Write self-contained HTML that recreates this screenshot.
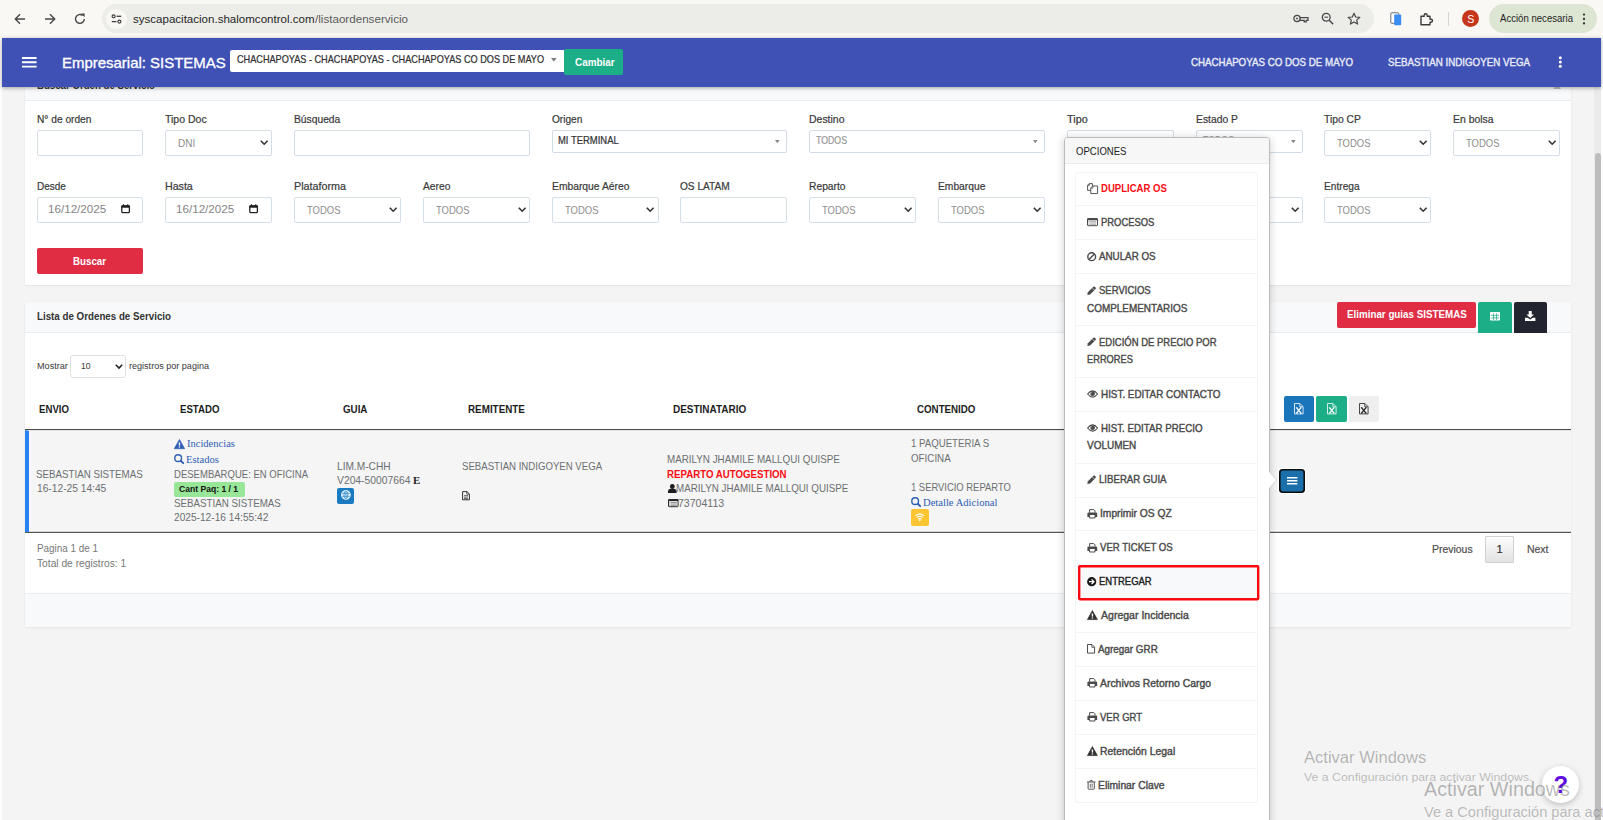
<!DOCTYPE html>
<html lang="es"><head><meta charset="utf-8"><title>Lista de Ordenes de Servicio</title><style>
*{box-sizing:border-box;margin:0;padding:0}
html,body{width:1603px;height:820px;overflow:hidden}
body{position:relative;background:#f4f4f4;font-family:"Liberation Sans",sans-serif;font-size:11.2px;color:#676a6c}
.t{position:absolute;white-space:nowrap;display:inline-block;transform-origin:0 50%}
.b{position:absolute}
.i{position:absolute;overflow:visible}
.sec{position:absolute}
ul{list-style:none}
a{text-decoration:none;color:inherit}
.inp{background:#fff;border:1px solid #d5dde8;border-radius:2px}
.lbl{color:#3a3a3a}
.card{background:#fff;box-shadow:0 1px 2px rgba(0,0,0,.06),0 0 1px rgba(0,0,0,.06)}
.chead{background:#f8f9fa;border-bottom:1px solid #e9ecef}
.btn{border:0}
button{font-family:inherit;padding:0;cursor:pointer}
.med{-webkit-text-stroke:0.4px currentColor}
.med2{-webkit-text-stroke:0.22px currentColor}
</style></head><body><div class="sec" id="chrome" style="left:0;top:0;width:1603px;height:38px;background:#f9f8f4"><div class="b" style="left:102px;top:4px;width:1272px;height:29px;background:#ecede8;border-radius:14.5px"></div><div class="b" style="left:106px;top:8.5px;width:20.5px;height:20.5px;background:#f9f8f4;border-radius:50%"></div><svg class="i" style="left:14px;top:12.5px;" width="12" height="12" viewBox="0 0 12 12" aria-hidden="true"><path d="M11 6H1.6M6 1.3L1.3 6L6 10.7" fill="none" stroke="#474747" stroke-width="1.4"></path></svg><svg class="i" style="left:44px;top:12.5px;" width="12" height="12" viewBox="0 0 12 12" aria-hidden="true"><path d="M1 6H10.4M6 1.3L10.7 6L6 10.7" fill="none" stroke="#474747" stroke-width="1.4"></path></svg><svg class="i" style="left:74px;top:12.5px;" width="12" height="12" viewBox="0 0 12 12" aria-hidden="true"><path d="M10.3 6A4.4 4.4 0 1 1 8.6 2.5" fill="none" stroke="#474747" stroke-width="1.4"></path><path d="M7 0.6H10.6V4.2Z" fill="#474747"></path></svg><svg class="i" style="left:111px;top:14px;" width="11" height="10" viewBox="0 0 11 10" aria-hidden="true"><circle cx="2.6" cy="2.3" r="1.5" fill="none" stroke="#3c3c3c" stroke-width="1.2"></circle><path d="M5.6 2.3H10.2" stroke="#3c3c3c" stroke-width="1.3"></path><circle cx="8.4" cy="7.6" r="1.5" fill="none" stroke="#3c3c3c" stroke-width="1.2"></circle><path d="M0.8 7.6H5.4" stroke="#3c3c3c" stroke-width="1.3"></path></svg><span class="t" style="left: 132.8px; top: 11px; font-size: 11.6px; line-height: 16px; color: rgb(31, 31, 31); transform: scaleX(0.9953);">syscapacitacion.shalomcontrol.com</span><span class="t" style="left: 314.6px; top: 11px; font-size: 11.6px; line-height: 16px; color: rgb(90, 90, 90); transform: scaleX(1.0022);">/listaordenservicio</span><svg class="i" style="left:1293px;top:13px;" width="16" height="11" viewBox="0 0 16 11" aria-hidden="true"><circle cx="4" cy="5.5" r="3.1" fill="none" stroke="#474747" stroke-width="1.3"></circle><circle cx="4" cy="5.5" r="0.9" fill="#474747"></circle><path d="M7 4.6H15V7.4H13.2V8.8H11.2V7.4H7" fill="none" stroke="#474747" stroke-width="1.2"></path></svg><svg class="i" style="left:1321px;top:12px;" width="13" height="13" viewBox="0 0 13 13" aria-hidden="true"><circle cx="5.2" cy="5.2" r="3.9" fill="none" stroke="#474747" stroke-width="1.3"></circle><path d="M8.2 8.2L12.2 12.2" stroke="#474747" stroke-width="1.5"></path><path d="M3.3 5.2H7.1" stroke="#474747" stroke-width="1.1"></path></svg><svg class="i" style="left:1347px;top:12px;" width="14" height="13" viewBox="0 0 14 13" aria-hidden="true"><path d="M7 1.2L8.7 5L12.8 5.4L9.7 8.1L10.6 12.1L7 10L3.4 12.1L4.3 8.1L1.2 5.4L5.3 5Z" fill="none" stroke="#474747" stroke-width="1.2" stroke-linejoin="round"></path></svg><svg class="i" style="left:1390px;top:12px;" width="12" height="14" viewBox="0 0 12 14" aria-hidden="true"><rect x="0.8" y="0.8" width="8" height="10.5" rx="1" fill="#fff" stroke="#6a7076" stroke-width="1"></rect><rect x="4.2" y="2.6" width="7" height="10.6" rx="1" fill="#3b8df0"></rect></svg><svg class="i" style="left:1419px;top:11.5px;" width="14" height="14" viewBox="0 0 14 14" aria-hidden="true"><path d="M2 4.2H5.2V3.2A1.5 1.5 0 0 1 8.2 3.2V4.2H11V7.2H12A1.5 1.5 0 0 1 12 10.2H11V12.8H2Z" fill="none" stroke="#3c3c3c" stroke-width="1.4" stroke-linejoin="round"></path></svg><div class="b" style="left:1448.3px;top:12px;width:1px;height:14px;background:#d5d8cf"></div><div class="b" style="left:1462px;top:10px;width:17.4px;height:17.4px;background:#c5361b;border-radius:50%"></div><span class="t" style="left:1467.2px;top:13px;font-size:10.6px;line-height:12px;color:#fff;">S</span><div class="b" style="left:1489px;top:4px;width:108px;height:29px;background:#dde5d3;border-radius:14.5px"></div><span class="t" style="left: 1499.5px; top: 12px; font-size: 10.4px; line-height: 14px; color: rgb(31, 31, 31); transform: scaleX(0.9224);">Acción necesaria</span><svg class="i" style="left:1582px;top:12.6px;" width="4" height="12" viewBox="0 0 4 12" aria-hidden="true"><circle cx="2" cy="1.6" r="1.15" fill="#333"></circle><circle cx="2" cy="6" r="1.15" fill="#333"></circle><circle cx="2" cy="10.4" r="1.15" fill="#333"></circle></svg></div><div class="b" style="left:0px;top:38px;width:2px;height:782px;background:#fdfdfd"></div><div class="b" style="left:1601px;top:38px;width:2px;height:782px;background:#fdfdfd"></div><section class="sec card" id="buscar" style="left:25px;top:66px;width:1546px;height:219px"><div class="b chead" style="left:0px;top:0px;width:1546px;height:35px;"></div><h2 class="t" style="left: 12px; top: 12px; line-height: 14px; font-weight: 700; color: rgb(51, 51, 51); font-size: 11.2px; transform: scaleX(0.8626);">Buscar Orden de Servicio</h2><svg class="i" style="left:1528px;top:18px;" width="8" height="5" viewBox="0 0 8 5" aria-hidden="true"><path d="M0 5L4 0L8 5Z" fill="#bdbdbd"></path></svg><form><label class="t lbl med2" style="left: 12px; top: 46px; font-size: 11.2px; line-height: 14px; color: rgb(58, 58, 58); transform: scaleX(0.9093);">N° de orden</label><div class="b inp" style="left:12px;top:64px;width:106px;height:26px;"></div><label class="t lbl med2" style="left: 140px; top: 46px; font-size: 11.2px; line-height: 14px; color: rgb(58, 58, 58); transform: scaleX(0.94);">Tipo Doc</label><div class="b inp" style="left:140px;top:64px;width:107px;height:26px;"></div><span class="t" style="left: 153px; top: 70px; font-size: 10.8px; line-height: 14px; color: rgb(141, 141, 141); transform: scaleX(0.9243);">DNI</span><svg class="i" style="left:234.8px;top:74.1px;" width="8.4" height="5" viewBox="0 0 8.4 5" aria-hidden="true"><path d="M0.8 0.8L4.2 4.2L7.6 0.8" fill="none" stroke="#333" stroke-width="1.6"></path></svg><label class="t lbl med2" style="left: 269px; top: 46px; font-size: 11.2px; line-height: 14px; color: rgb(58, 58, 58); transform: scaleX(0.9188);">Búsqueda</label><div class="b inp" style="left:269px;top:64px;width:236px;height:26px;"></div><label class="t lbl med2" style="left: 526.6px; top: 46px; font-size: 11.2px; line-height: 14px; color: rgb(58, 58, 58); transform: scaleX(0.902);">Origen</label><div class="b inp" style="left:526.6px;top:64px;width:235.4px;height:22.5px;border-color:#d3dbe6;"></div><span class="t med2" style="left: 533.2px; top: 68px; font-size: 10.4px; line-height: 14px; color: rgb(51, 51, 51); transform: scaleX(0.9089);">MI TERMINAL</span><svg class="i" style="left:749.7px;top:74px;" width="5" height="3.4" viewBox="0 0 5 3.4" aria-hidden="true"><path d="M0 0H4.6L2.3 3.2Z" fill="#888"></path></svg><label class="t lbl med2" style="left: 784px; top: 46px; font-size: 11.2px; line-height: 14px; color: rgb(58, 58, 58); transform: scaleX(0.9357);">Destino</label><div class="b inp" style="left:784px;top:64px;width:236px;height:22.5px;border-color:#d3dbe6;"></div><span class="t med2" style="left: 790.6px; top: 68px; font-size: 10.4px; line-height: 14px; color: rgb(153, 153, 153); transform: scaleX(0.8432);">TODOS</span><svg class="i" style="left:1007.7px;top:74px;" width="5" height="3.4" viewBox="0 0 5 3.4" aria-hidden="true"><path d="M0 0H4.6L2.3 3.2Z" fill="#888"></path></svg><label class="t lbl med2" style="left: 1042px; top: 46px; font-size: 11.2px; line-height: 14px; color: rgb(58, 58, 58); transform: scaleX(0.9691);">Tipo</label><div class="b inp" style="left:1042px;top:64px;width:107px;height:22.5px;border-color:#d3dbe6;"></div><svg class="i" style="left:1136.7px;top:74px;" width="5" height="3.4" viewBox="0 0 5 3.4" aria-hidden="true"><path d="M0 0H4.6L2.3 3.2Z" fill="#888"></path></svg><label class="t lbl med2" style="left: 1171px; top: 46px; font-size: 11.2px; line-height: 14px; color: rgb(58, 58, 58); transform: scaleX(0.925);">Estado P</label><div class="b inp" style="left:1171px;top:64px;width:107px;height:22.5px;border-color:#d3dbe6;"></div><span class="t med2" style="left: 1177.6px; top: 68px; font-size: 10.4px; line-height: 14px; color: rgb(153, 153, 153); transform: scaleX(0.8432);">TODOS</span><svg class="i" style="left:1265.7px;top:74px;" width="5" height="3.4" viewBox="0 0 5 3.4" aria-hidden="true"><path d="M0 0H4.6L2.3 3.2Z" fill="#888"></path></svg><label class="t lbl med2" style="left: 1299px; top: 46px; font-size: 11.2px; line-height: 14px; color: rgb(58, 58, 58); transform: scaleX(0.925);">Tipo CP</label><div class="b inp" style="left:1299px;top:64px;width:107px;height:26px;"></div><span class="t" style="left: 1312px; top: 70px; font-size: 10.8px; line-height: 14px; color: rgb(141, 141, 141); transform: scaleX(0.8769);">TODOS</span><svg class="i" style="left:1393.8px;top:74.1px;" width="8.4" height="5" viewBox="0 0 8.4 5" aria-hidden="true"><path d="M0.8 0.8L4.2 4.2L7.6 0.8" fill="none" stroke="#333" stroke-width="1.6"></path></svg><label class="t lbl med2" style="left: 1428px; top: 46px; font-size: 11.2px; line-height: 14px; color: rgb(58, 58, 58); transform: scaleX(0.9323);">En bolsa</label><div class="b inp" style="left:1428px;top:64px;width:107px;height:26px;"></div><span class="t" style="left: 1441px; top: 70px; font-size: 10.8px; line-height: 14px; color: rgb(141, 141, 141); transform: scaleX(0.8769);">TODOS</span><svg class="i" style="left:1522.8px;top:74.1px;" width="8.4" height="5" viewBox="0 0 8.4 5" aria-hidden="true"><path d="M0.8 0.8L4.2 4.2L7.6 0.8" fill="none" stroke="#333" stroke-width="1.6"></path></svg><label class="t lbl med2" style="left: 12px; top: 113px; font-size: 11.2px; line-height: 14px; color: rgb(58, 58, 58); transform: scaleX(0.8904);">Desde</label><div class="b inp" style="left:12px;top:131px;width:106px;height:26px;"></div><span class="t" style="left: 22.6px; top: 136px; font-size: 10.8px; line-height: 14px; color: rgb(132, 132, 132); transform: scaleX(1.0768);">16/12/2025</span><svg class="i" style="left:96.4px;top:138.4px;" width="9.4" height="9.4" viewBox="0 0 9.4 9.4" aria-hidden="true"><rect x="0.8" y="1.8" width="7.6" height="6.9" rx="0.9" fill="#fff" stroke="#222" stroke-width="1.3"></rect><rect x="0.4" y="1.2" width="8.4" height="2.5" rx="0.6" fill="#222"></rect><path d="M2.5 0.2V1.6M6.7 0.2V1.6" stroke="#222" stroke-width="1.1"></path></svg><label class="t lbl med2" style="left: 140px; top: 113px; font-size: 11.2px; line-height: 14px; color: rgb(58, 58, 58); transform: scaleX(0.9509);">Hasta</label><div class="b inp" style="left:140px;top:131px;width:107px;height:26px;"></div><span class="t" style="left: 150.6px; top: 136px; font-size: 10.8px; line-height: 14px; color: rgb(132, 132, 132); transform: scaleX(1.0768);">16/12/2025</span><svg class="i" style="left:224.4px;top:138.4px;" width="9.4" height="9.4" viewBox="0 0 9.4 9.4" aria-hidden="true"><rect x="0.8" y="1.8" width="7.6" height="6.9" rx="0.9" fill="#fff" stroke="#222" stroke-width="1.3"></rect><rect x="0.4" y="1.2" width="8.4" height="2.5" rx="0.6" fill="#222"></rect><path d="M2.5 0.2V1.6M6.7 0.2V1.6" stroke="#222" stroke-width="1.1"></path></svg><label class="t lbl med2" style="left: 269px; top: 113px; font-size: 11.2px; line-height: 14px; color: rgb(58, 58, 58); transform: scaleX(0.961);">Plataforma</label><div class="b inp" style="left:269px;top:131px;width:107px;height:26px;"></div><span class="t" style="left: 282px; top: 137px; font-size: 10.8px; line-height: 14px; color: rgb(141, 141, 141); transform: scaleX(0.8769);">TODOS</span><svg class="i" style="left:363.8px;top:141.1px;" width="8.4" height="5" viewBox="0 0 8.4 5" aria-hidden="true"><path d="M0.8 0.8L4.2 4.2L7.6 0.8" fill="none" stroke="#333" stroke-width="1.6"></path></svg><label class="t lbl med2" style="left: 398px; top: 113px; font-size: 11.2px; line-height: 14px; color: rgb(58, 58, 58); transform: scaleX(0.9176);">Aereo</label><div class="b inp" style="left:398px;top:131px;width:107px;height:26px;"></div><span class="t" style="left: 411px; top: 137px; font-size: 10.8px; line-height: 14px; color: rgb(141, 141, 141); transform: scaleX(0.8769);">TODOS</span><svg class="i" style="left:492.8px;top:141.1px;" width="8.4" height="5" viewBox="0 0 8.4 5" aria-hidden="true"><path d="M0.8 0.8L4.2 4.2L7.6 0.8" fill="none" stroke="#333" stroke-width="1.6"></path></svg><label class="t lbl med2" style="left: 526.6px; top: 113px; font-size: 11.2px; line-height: 14px; color: rgb(58, 58, 58); transform: scaleX(0.9218);">Embarque Aéreo</label><div class="b inp" style="left:526.6px;top:131px;width:107px;height:26px;"></div><span class="t" style="left: 539.6px; top: 137px; font-size: 10.8px; line-height: 14px; color: rgb(141, 141, 141); transform: scaleX(0.8769);">TODOS</span><svg class="i" style="left:621.4px;top:141.1px;" width="8.4" height="5" viewBox="0 0 8.4 5" aria-hidden="true"><path d="M0.8 0.8L4.2 4.2L7.6 0.8" fill="none" stroke="#333" stroke-width="1.6"></path></svg><label class="t lbl med2" style="left: 655px; top: 113px; font-size: 11.2px; line-height: 14px; color: rgb(58, 58, 58); transform: scaleX(0.9049);">OS LATAM</label><div class="b inp" style="left:655px;top:131px;width:107px;height:26px;"></div><label class="t lbl med2" style="left: 784px; top: 113px; font-size: 11.2px; line-height: 14px; color: rgb(58, 58, 58); transform: scaleX(0.9193);">Reparto</label><div class="b inp" style="left:784px;top:131px;width:107px;height:26px;"></div><span class="t" style="left: 797px; top: 137px; font-size: 10.8px; line-height: 14px; color: rgb(141, 141, 141); transform: scaleX(0.8769);">TODOS</span><svg class="i" style="left:878.8px;top:141.1px;" width="8.4" height="5" viewBox="0 0 8.4 5" aria-hidden="true"><path d="M0.8 0.8L4.2 4.2L7.6 0.8" fill="none" stroke="#333" stroke-width="1.6"></path></svg><label class="t lbl med2" style="left: 913px; top: 113px; font-size: 11.2px; line-height: 14px; color: rgb(58, 58, 58); transform: scaleX(0.9182);">Embarque</label><div class="b inp" style="left:913px;top:131px;width:107px;height:26px;"></div><span class="t" style="left: 926px; top: 137px; font-size: 10.8px; line-height: 14px; color: rgb(141, 141, 141); transform: scaleX(0.8769);">TODOS</span><svg class="i" style="left:1007.8px;top:141.1px;" width="8.4" height="5" viewBox="0 0 8.4 5" aria-hidden="true"><path d="M0.8 0.8L4.2 4.2L7.6 0.8" fill="none" stroke="#333" stroke-width="1.6"></path></svg><div class="b inp" style="left:1171px;top:131px;width:107px;height:26px;"></div><span class="t" style="left: 1184px; top: 137px; font-size: 10.8px; line-height: 14px; color: rgb(141, 141, 141); transform: scaleX(0.8769);">TODOS</span><svg class="i" style="left:1265.8px;top:141.1px;" width="8.4" height="5" viewBox="0 0 8.4 5" aria-hidden="true"><path d="M0.8 0.8L4.2 4.2L7.6 0.8" fill="none" stroke="#333" stroke-width="1.6"></path></svg><label class="t lbl med2" style="left: 1299px; top: 113px; font-size: 11.2px; line-height: 14px; color: rgb(58, 58, 58); transform: scaleX(0.9085);">Entrega</label><div class="b inp" style="left:1299px;top:131px;width:107px;height:26px;"></div><span class="t" style="left: 1312px; top: 137px; font-size: 10.8px; line-height: 14px; color: rgb(141, 141, 141); transform: scaleX(0.8769);">TODOS</span><svg class="i" style="left:1393.8px;top:141.1px;" width="8.4" height="5" viewBox="0 0 8.4 5" aria-hidden="true"><path d="M0.8 0.8L4.2 4.2L7.6 0.8" fill="none" stroke="#333" stroke-width="1.6"></path></svg><button type="button" class="b btn" style="left:12px;top:182.4px;width:106px;height:25.7px;background:#e02d44;border-radius:2px"><span class="t" style="left: 36.3px; top: 5.6px; font-size: 10.6px; line-height: 14px; font-weight: 700; color: rgb(255, 255, 255); transform: scaleX(0.9187);">Buscar</span></button></form></section><section class="sec card" id="lista" style="left:25px;top:302px;width:1546px;height:325px"><div class="b chead" style="left:0px;top:0px;width:1546px;height:31px;"></div><h2 class="t" style="left: 12px; top: 7px; line-height: 14px; font-weight: 700; color: rgb(51, 51, 51); font-size: 11.2px; transform: scaleX(0.8725);">Lista de Ordenes de Servicio</h2><button type="button" class="b btn" style="left:1311.8px;top:0px;width:139.2px;height:25.5px;background:#e02d44;border-radius:2px"><span class="t" style="left: 9.9px; top: 5px; font-size: 10.8px; line-height: 14px; font-weight: 700; color: rgb(255, 255, 255); transform: scaleX(0.9076);">Eliminar guias SISTEMAS</span></button><button class="b btn" style="left:1452.7px;top:0px;width:34px;height:31.2px;background:#1bae87;border-radius:2px 2px 0 0"></button><svg class="i" style="left:1464.6px;top:10.4px;" width="10" height="9" viewBox="0 0 10 9" aria-hidden="true"><rect x="0" y="0" width="10" height="8.6" rx="0.8" fill="#fff"></rect><path d="M0.8 3.3H9.2M0.8 5.9H9.2M3.6 1.4V8M6.5 1.4V8" stroke="#1bae87" stroke-width="0.75"></path></svg><button class="b btn" style="left:1488.7px;top:0px;width:32.9px;height:31.2px;background:#22242f;border-radius:2px 2px 0 0"></button><svg class="i" style="left:1500px;top:9.4px;" width="10.4" height="10" viewBox="0 0 10.4 10" aria-hidden="true"><path d="M3.7 0H6.7V3.4H9L5.2 7L1.4 3.4H3.7Z" fill="#fff"></path><path d="M0 6.8H2.6L5.2 8.6L7.8 6.8H10.4V10H0Z" fill="#fff"></path></svg><span class="t" style="left: 12px; top: 57px; font-size: 9.6px; line-height: 14px; color: rgb(58, 58, 58); transform: scaleX(0.9503);">Mostrar</span><div class="b inp" style="left:45.4px;top:53px;width:56px;height:23px;border-color:#e0e0e0;border-radius:3px;"></div><span class="t" style="left: 56.4px; top: 57px; font-size: 9.8px; line-height: 14px; color: rgb(58, 58, 58); transform: scaleX(0.8802);">10</span><svg class="i" style="left:89.6px;top:62px;" width="8" height="5" viewBox="0 0 8 5" aria-hidden="true"><path d="M0.8 0.8L4 4L7.2 0.8" fill="none" stroke="#222" stroke-width="1.6"></path></svg><span class="t" style="left: 103.6px; top: 57px; font-size: 9.6px; line-height: 14px; color: rgb(58, 58, 58); transform: scaleX(0.9434);">registros por pagina</span><div role="table"><div role="row"><span class="t" style="left: 14px; top: 100px; font-size: 11px; line-height: 14px; font-weight: 700; color: rgb(29, 29, 29); transform: scaleX(0.8763);">ENVIO</span><span class="t" style="left: 155px; top: 100px; font-size: 11px; line-height: 14px; font-weight: 700; color: rgb(29, 29, 29); transform: scaleX(0.8772);">ESTADO</span><span class="t" style="left: 317.5px; top: 100px; font-size: 11px; line-height: 14px; font-weight: 700; color: rgb(29, 29, 29); transform: scaleX(0.8873);">GUIA</span><span class="t" style="left: 443px; top: 100px; font-size: 11px; line-height: 14px; font-weight: 700; color: rgb(29, 29, 29); transform: scaleX(0.8952);">REMITENTE</span><span class="t" style="left: 648px; top: 100px; font-size: 11px; line-height: 14px; font-weight: 700; color: rgb(29, 29, 29); transform: scaleX(0.9063);">DESTINATARIO</span><span class="t" style="left: 891.8px; top: 100px; font-size: 11px; line-height: 14px; font-weight: 700; color: rgb(29, 29, 29); transform: scaleX(0.8848);">CONTENIDO</span><button class="b btn" style="left:1258.6px;top:94px;width:30px;height:25.7px;background:#1a75bb;border-radius:2px"></button><svg class="i" style="left:1268.8px;top:100.9px;" width="9.6" height="11.4" viewBox="0 0 9.6 11.4" aria-hidden="true"><path d="M0.5 0.5H5.9L9.1 3.7V10.9H0.5Z" fill="none" stroke="#fff" stroke-width="0.9" stroke-linejoin="round" opacity="0.9"></path><path d="M5.8 0.7V3.8H8.9" fill="none" stroke="#fff" stroke-width="0.8" opacity="0.9"></path><path d="M2.5 4.6L7 10.2M7 4.6L2.5 10.2" stroke="#fff" stroke-width="1.35"></path><path d="M1.9 4.6H3.3M6.2 4.6H7.6M1.9 10.2H3.4M6.1 10.2H7.6" stroke="#fff" stroke-width="0.7"></path></svg><button class="b btn" style="left:1291px;top:94px;width:31px;height:25.7px;background:#1bae87;border-radius:2px"></button><svg class="i" style="left:1301.7px;top:100.9px;" width="9.6" height="11.4" viewBox="0 0 9.6 11.4" aria-hidden="true"><path d="M0.5 0.5H5.9L9.1 3.7V10.9H0.5Z" fill="none" stroke="#fff" stroke-width="0.9" stroke-linejoin="round" opacity="0.9"></path><path d="M5.8 0.7V3.8H8.9" fill="none" stroke="#fff" stroke-width="0.8" opacity="0.9"></path><path d="M2.5 4.6L7 10.2M7 4.6L2.5 10.2" stroke="#fff" stroke-width="1.35"></path><path d="M1.9 4.6H3.3M6.2 4.6H7.6M1.9 10.2H3.4M6.1 10.2H7.6" stroke="#fff" stroke-width="0.7"></path></svg><button class="b btn" style="left:1324px;top:94px;width:30px;height:25.7px;background:#efefef;border-radius:2px"></button><svg class="i" style="left:1334.4px;top:100.9px;" width="9.6" height="11.4" viewBox="0 0 9.6 11.4" aria-hidden="true"><path d="M0.5 0.5H5.9L9.1 3.7V10.9H0.5Z" fill="none" stroke="#222" stroke-width="0.9" stroke-linejoin="round" opacity="0.9"></path><path d="M5.8 0.7V3.8H8.9" fill="none" stroke="#222" stroke-width="0.8" opacity="0.9"></path><path d="M2.5 4.6L7 10.2M7 4.6L2.5 10.2" stroke="#222" stroke-width="1.35"></path><path d="M1.9 4.6H3.3M6.2 4.6H7.6M1.9 10.2H3.4M6.1 10.2H7.6" stroke="#222" stroke-width="0.7"></path></svg></div><div class="b" style="left:0px;top:127px;width:1546px;height:1px;background:#4a4a4a"></div><div role="row"><div class="b" style="left:0px;top:128px;width:1546px;height:102px;background:#f5f5f5;border-left:4px solid #2a82f2;border-top:1px solid #e4e4e4"></div><div class="b" style="left:4px;top:228px;width:1542px;height:1px;background:#fbfbfb"></div><div class="b" style="left:4px;top:229px;width:1542px;height:1px;background:#cfcfcf"></div><div class="b" style="left:0px;top:230px;width:1546px;height:1px;background:#585858"></div><span class="t" style="left: 11.4px; top: 165px; font-size: 11.2px; line-height: 14px; color: rgb(108, 111, 113); transform: scaleX(0.8711);">SEBASTIAN SISTEMAS</span><span class="t" style="left: 11.5px; top: 179px; font-size: 11.2px; line-height: 14px; color: rgb(108, 111, 113); transform: scaleX(0.9132);">16-12-25 14:45</span><svg class="i" style="left:148.9px;top:136.65px;" width="10.9" height="10.028" viewBox="0 0 10 9.2" aria-hidden="true"><path d="M5 0.4L9.8 8.9H0.2Z" fill="#2f5fb3" stroke="#2f5fb3" stroke-width="0.6" stroke-linejoin="round"></path><path d="M5 3.2V6" stroke="#fff" stroke-width="1.3"></path><circle cx="5" cy="7.4" r="0.7" fill="#fff"></circle></svg><a class="t" style="left: 161.9px; top: 134px; font-size: 10.7px; line-height: 14px; color: rgb(47, 95, 179); font-family: &quot;Liberation Serif&quot;, serif; transform: scaleX(0.9841);">Incidencias</a><svg class="i" style="left:149.3px;top:151.95px;" width="9.9" height="9.9" viewBox="0 0 10 10" aria-hidden="true"><circle cx="4.2" cy="4.2" r="3.4" fill="none" stroke="#2f5fb3" stroke-width="1.4"></circle><path d="M6.8 6.8L9.3 9.3" stroke="#2f5fb3" stroke-width="1.9" stroke-linecap="round"></path></svg><a class="t" style="left: 161.2px; top: 150px; font-size: 10.7px; line-height: 14px; color: rgb(47, 95, 179); font-family: &quot;Liberation Serif&quot;, serif; transform: scaleX(0.9925);">Estados</a><span class="t" style="left: 149.1px; top: 165px; font-size: 11.2px; line-height: 14px; color: rgb(108, 111, 113); transform: scaleX(0.852);">DESEMBARQUE: EN OFICINA</span><div class="b" style="left:148.8px;top:180px;width:70.8px;height:14.8px;background:#98e698;border-radius:2px"></div><span class="t" style="left: 154.3px; top: 180px; font-size: 9.4px; line-height: 14px; font-weight: 700; color: rgb(17, 17, 17); transform: scaleX(0.9147);">Cant Paq: 1 / 1</span><span class="t" style="left: 149.1px; top: 194px; font-size: 11.2px; line-height: 14px; color: rgb(108, 111, 113); transform: scaleX(0.8719);">SEBASTIAN SISTEMAS</span><span class="t" style="left: 149.1px; top: 208px; font-size: 11.2px; line-height: 14px; color: rgb(108, 111, 113); transform: scaleX(0.9077);">2025-12-16 14:55:42</span><span class="t" style="left: 311.6px; top: 157px; font-size: 11.2px; line-height: 14px; color: rgb(108, 111, 113); transform: scaleX(0.9078);">LIM.M-CHH</span><span class="t" style="left: 311.6px; top: 171px; font-size: 11.2px; line-height: 14px; color: rgb(108, 111, 113); transform: scaleX(0.9229);">V204-50007664</span><span class="t" style="left: 387.7px; top: 171px; font-size: 11px; line-height: 14px; font-weight: 700; color: rgb(34, 34, 34); font-family: &quot;Liberation Serif&quot;, serif; transform: scaleX(0.9804);">E</span><button class="b btn" style="left:312px;top:185.6px;width:17.4px;height:16.6px;background:#1a7bc0;border-radius:2px"></button><svg class="i" style="left:315.9px;top:187.5px;" width="9.8" height="9.8" viewBox="0 0 8 8" aria-hidden="true"><circle cx="4" cy="4" r="3.8" fill="#dcecf8"></circle><ellipse cx="4" cy="4" rx="1.6" ry="3.2" fill="none" stroke="#3f93d0" stroke-width="0.7"></ellipse><path d="M0.8 2.8H7.2M0.8 5.2H7.2M4 0.6V7.4" stroke="#3f93d0" stroke-width="0.7"></path><circle cx="4" cy="4" r="3.6" fill="none" stroke="#f4faff" stroke-width="0.5"></circle></svg><span class="t" style="left: 436.6px; top: 157px; font-size: 11.2px; line-height: 14px; color: rgb(108, 111, 113); transform: scaleX(0.8601);">SEBASTIAN INDIGOYEN VEGA</span><svg class="i" style="left:436.8px;top:189px;" width="8" height="9.4" viewBox="0 0 8 9.4" aria-hidden="true"><path d="M0.6 0.6H5L7.4 3V8.8H0.6Z" fill="none" stroke="#333" stroke-width="1"></path><path d="M4.8 0.8V3.2H7.2" fill="none" stroke="#333" stroke-width="0.8"></path><path d="M2 4.6H6M2 6.1H6M2 7.5H6" stroke="#333" stroke-width="0.7"></path></svg><span class="t" style="left: 642.4px; top: 150px; font-size: 11.2px; line-height: 14px; color: rgb(108, 111, 113); transform: scaleX(0.8782);">MARILYN JHAMILE MALLQUI QUISPE</span><span class="t" style="left: 642.4px; top: 165px; font-size: 11.2px; line-height: 14px; font-weight: 700; color: rgb(251, 13, 18); transform: scaleX(0.8654);">REPARTO AUTOGESTION</span><svg class="i" style="left:642.6px;top:181.6px;" width="8.6" height="9" viewBox="0 0 8.6 9" aria-hidden="true"><circle cx="4.3" cy="2.5" r="2.4" fill="#1d1d1d"></circle><path d="M0 9V7.2C0 5.4 1.6 4.6 4.3 4.6S8.6 5.4 8.6 7.2V9Z" fill="#1d1d1d"></path></svg><span class="t" style="left: 651.4px; top: 179px; font-size: 11.2px; line-height: 14px; color: rgb(108, 111, 113); transform: scaleX(0.8752);">MARILYN JHAMILE MALLQUI QUISPE</span><svg class="i" style="left:642.6px;top:196.8px;" width="10.6" height="8.2" viewBox="0 0 10.6 8.2" aria-hidden="true"><rect x="0.5" y="0.5" width="9.6" height="7.2" rx="0.6" fill="#fff" stroke="#2b2b2b" stroke-width="1"></rect><rect x="0.5" y="0.3" width="9.6" height="1.9" fill="#2b2b2b"></rect><path d="M2.8 3.6H8.8M2.8 5H8.8M2.8 6.4H8.8" stroke="#777" stroke-width="0.8"></path><path d="M1.5 3.6H2.3M1.5 5H2.3M1.5 6.4H2.3" stroke="#555" stroke-width="0.8"></path></svg><span class="t" style="left: 653.2px; top: 194px; font-size: 11.2px; line-height: 14px; color: rgb(108, 111, 113); transform: scaleX(0.9438);">73704113</span><span class="t" style="left: 886.2px; top: 134px; font-size: 11.2px; line-height: 14px; color: rgb(108, 111, 113); transform: scaleX(0.8622);">1 PAQUETERIA S</span><span class="t" style="left: 886.2px; top: 149px; font-size: 11.2px; line-height: 14px; color: rgb(108, 111, 113); transform: scaleX(0.8749);">OFICINA</span><span class="t" style="left: 886.2px; top: 178px; font-size: 11.2px; line-height: 14px; color: rgb(108, 111, 113); transform: scaleX(0.8419);">1 SERVICIO REPARTO</span><svg class="i" style="left:886.4px;top:195.35px;" width="9.9" height="9.9" viewBox="0 0 10 10" aria-hidden="true"><circle cx="4.2" cy="4.2" r="3.4" fill="none" stroke="#2f5fb3" stroke-width="1.4"></circle><path d="M6.8 6.8L9.3 9.3" stroke="#2f5fb3" stroke-width="1.9" stroke-linecap="round"></path></svg><a class="t" style="left: 898.4px; top: 193px; font-size: 10.7px; line-height: 14px; color: rgb(47, 95, 179); font-family: &quot;Liberation Serif&quot;, serif; transform: scaleX(0.9908);">Detalle Adicional</a><button class="b btn" style="left:886.1px;top:207px;width:18.1px;height:17px;background:#fcc531;border-radius:2px"></button><svg class="i" style="left:890.3px;top:210.7px;opacity:.92;" width="9.6" height="8.2" viewBox="0 0 9.6 8.2" aria-hidden="true"><path d="M0.5 2.9Q4.8 -1.1 9.1 2.9" fill="none" stroke="#fff" stroke-width="1.3"></path><path d="M1.8 4.5Q4.8 1.8 7.8 4.5" fill="none" stroke="#fff" stroke-width="1.3"></path><path d="M3.2 6Q4.8 4.6 6.4 6" fill="none" stroke="#fff" stroke-width="1.2"></path><rect x="4" y="6.2" width="1.6" height="1.8" fill="#fff"></rect></svg><button class="b btn2" style="left:1253.6px;top:167px;width:26.6px;height:24.2px;background:#1a6eaa;border:0;border-radius:4px;box-shadow:inset 0 0 0 1.6px #0d0d0d,0 0 0 1px #fff"></button><svg class="i" style="left:1262px;top:175px;" width="10.4" height="8" viewBox="0 0 10.4 8" aria-hidden="true"><path d="M0 0.7H10.4M0 3.7H10.4M0 6.7H10.4" stroke="#fff" stroke-width="1.4"></path></svg></div></div><span class="t" style="left: 12px; top: 239px; font-size: 11.2px; line-height: 14px; color: rgb(119, 119, 119); transform: scaleX(0.8833);">Pagina 1 de 1</span><span class="t" style="left: 12px; top: 254px; font-size: 11.2px; line-height: 14px; color: rgb(119, 119, 119); transform: scaleX(0.9136);">Total de registros: 1</span><span class="t med2" style="left: 1406.6px; top: 240px; font-size: 11.2px; line-height: 14px; color: rgb(80, 80, 80); transform: scaleX(0.9327);">Previous</span><div class="b" style="left:1460px;top:234px;width:28.6px;height:27px;background:linear-gradient(#fdfdfd,#e2e2e2);border:1px solid #d0d0d0;border-radius:1px"></div><span class="t med2" style="left:1471.4px;top:240px;font-size:11.2px;line-height:14px;color:#333;">1</span><span class="t med2" style="left: 1501.8px; top: 240px; font-size: 11.2px; line-height: 14px; color: rgb(80, 80, 80); transform: scaleX(0.9341);">Next</span><div class="b" style="left:0px;top:290.9px;width:1546px;height:34.1px;background:#f8f9fa;border-top:1px solid #eceff1"></div></section><header class="sec" id="appbar" style="left:2px;top:38px;width:1599px;height:49px;background:#3f51b5;box-shadow:0 1px 4px rgba(0,0,0,.35);z-index:20"><svg class="i" style="left:20px;top:19px;" width="14.6" height="10.6" viewBox="0 0 14.6 10.6" aria-hidden="true"><path d="M0 1H14.6M0 5.3H14.6M0 9.6H14.6" stroke="#fff" stroke-width="1.9"></path></svg><h1 class="t med2" style="left: 60.2px; top: 15px; font-size: 14.6px; line-height: 20px; color: rgb(255, 255, 255); font-weight: 400; -webkit-text-stroke-width: 0.32px; transform: scaleX(1.0246);">Empresarial: SISTEMAS</h1><div class="b" style="left:228px;top:11.6px;width:334.4px;height:22px;background:#fff;border-radius:2px 0 0 2px"></div><span class="t med2" style="left: 235px; top: 15px; font-size: 10.4px; line-height: 14px; color: rgb(47, 47, 47); transform: scaleX(0.8794);">CHACHAPOYAS - CHACHAPOYAS - CHACHAPOYAS CO DOS DE MAYO</span><svg class="i" style="left:548.5px;top:20.2px;" width="6" height="4" viewBox="0 0 6 4" aria-hidden="true"><path d="M0 0H5.6L2.8 3.6Z" fill="#7a7a7a"></path></svg><button type="button" class="b btn" style="left:562.4px;top:11.4px;width:59.1px;height:25.5px;background:#1bae87;border-radius:2px"><span class="t" style="left: 10.4px; top: 6.6px; font-size: 10.4px; line-height: 14px; font-weight: 700; color: rgb(255, 255, 255); transform: scaleX(0.9524);">Cambiar</span></button><span class="t med" style="left: 1189px; top: 17px; font-size: 11px; line-height: 14px; color: rgb(232, 234, 246); transform: scaleX(0.8854);">CHACHAPOYAS CO DOS DE MAYO</span><span class="t med" style="left: 1386.2px; top: 17px; font-size: 11px; line-height: 14px; color: rgb(232, 234, 246); transform: scaleX(0.8866);">SEBASTIAN INDIGOYEN VEGA</span><svg class="i" style="left:1555.8px;top:18.2px;" width="5" height="12" viewBox="0 0 5 12" aria-hidden="true"><circle cx="2.3" cy="1.7" r="1.5" fill="#fff"></circle><circle cx="2.3" cy="6" r="1.5" fill="#fff"></circle><circle cx="2.3" cy="10.3" r="1.5" fill="#fff"></circle></svg></header><div class="sec" id="popover" role="tooltip" style="left:1064px;top:137px;width:205.6px;height:700px;background:#fff;border:1px solid #bcbcbc;border-radius:4px;box-shadow:0 1px 8px rgba(0,0,0,.2);z-index:30"><div class="b" style="left:0px;top:0px;width:203.6px;height:25.6px;background:#f7f7f7;border-bottom:1px solid #ebebeb;border-radius:3px 3px 0 0"></div><h3 class="t" style="left: 10.6px; top: 6px; line-height: 14px; color: rgb(33, 33, 33); font-size: 11.2px; font-weight: 400; transform: scaleX(0.855);">OPCIONES</h3><svg class="i" style="left:203.8px;top:332.9px;" width="9" height="18" viewBox="0 0 9 18" aria-hidden="true"><path d="M0 0.4L7.8 9L0 17.6" fill="#fff" stroke="#d2d2d2" stroke-width="1"></path><path d="M0 1.5V16.5" stroke="#fff" stroke-width="1.6"></path></svg><ul><li class="b" style="left:10px;top:33.5px;width:183px;height:34.93px;border:1px solid #f3f4f5;border-radius:3px 3px 0 0;"><svg class="i" style="left:11px;top:10.2px;" width="11.2" height="11.2" viewBox="0 0 11.2 11.2" aria-hidden="true"><path d="M2.2 0.6H5.4V3.2M2.2 0.6L0.6 2.2V7.4H3.6" fill="none" stroke="#555" stroke-width="1"></path><path d="M0.6 2.4H2.4V0.8" fill="none" stroke="#555" stroke-width="0.8"></path><path d="M5.8 3H10.6V10.6H3.8V5Z" fill="none" stroke="#555" stroke-width="1" stroke-linejoin="round"></path><path d="M3.9 5.1H5.9V3.1" fill="none" stroke="#555" stroke-width="0.8"></path></svg><span class="t" style="left: 24.7px; top: 9.5px; font-size: 10.3px; line-height: 14px; font-weight: 700; color: rgb(251, 13, 18); transform: scaleX(0.929);">DUPLICAR OS</span></li><li class="b" style="left:10px;top:67.43px;width:183px;height:34.93px;border:1px solid #f3f4f5;"><svg class="i" style="left:11px;top:11.5px;" width="11" height="8.2" viewBox="0 0 11 8.2" aria-hidden="true"><rect x="0.5" y="0.5" width="10" height="7.2" rx="0.6" fill="#fff" stroke="#4a4a4a" stroke-width="1"></rect><rect x="0.5" y="0.3" width="10" height="2" fill="#4a4a4a"></rect><path d="M2.8 3.6H9.2M2.8 5H9.2M2.8 6.4H9.2" stroke="#9a9a9a" stroke-width="0.8"></path><path d="M1.5 3.6H2.3M1.5 5H2.3M1.5 6.4H2.3" stroke="#777" stroke-width="0.8"></path></svg><span class="t med" style="left: 24.7px; top: 9.57px; font-size: 10.3px; line-height: 14px; color: rgb(74, 74, 74); transform: scaleX(0.9148);">PROCESOS</span></li><li class="b" style="left:10px;top:101.36px;width:183px;height:34.93px;border:1px solid #f3f4f5;"><svg class="i" style="left:11px;top:11.3px;" width="9.4" height="9.4" viewBox="0 0 9.4 9.4" aria-hidden="true"><circle cx="4.7" cy="4.7" r="3.9" fill="none" stroke="#4a4a4a" stroke-width="1.4"></circle><path d="M2 7.4L7.4 2" stroke="#4a4a4a" stroke-width="1.4"></path></svg><span class="t med" style="left: 23.3px; top: 9.64px; font-size: 10.3px; line-height: 14px; color: rgb(74, 74, 74); transform: scaleX(0.951);">ANULAR OS</span></li><li class="b" style="left:10px;top:135.29px;width:183px;height:52.8px;border:1px solid #f3f4f5;"><svg class="i" style="left:11px;top:11.3px;" width="9.4" height="9.4" viewBox="0 0 9.4 9.4" aria-hidden="true"><path d="M0.3 9.1L0.9 6.3L6.4 0.8A1 1 0 0 1 7.8 0.8L8.6 1.6A1 1 0 0 1 8.6 3L3.1 8.5Z" fill="#4a4a4a"></path><path d="M5.4 2L7.4 4" stroke="#fff" stroke-width="0.6"></path></svg><span class="t med" style="left: 23.3px; top: 9.71px; font-size: 10.3px; line-height: 14px; color: rgb(74, 74, 74); transform: scaleX(0.925);">SERVICIOS</span><span class="t med" style="left: 11px; top: 27.71px; font-size: 10.3px; line-height: 14px; color: rgb(74, 74, 74); transform: scaleX(0.965);">COMPLEMENTARIOS</span></li><li class="b" style="left:10px;top:187.09px;width:183px;height:52.8px;border:1px solid #f3f4f5;"><svg class="i" style="left:11px;top:11.3px;" width="9.4" height="9.4" viewBox="0 0 9.4 9.4" aria-hidden="true"><path d="M0.3 9.1L0.9 6.3L6.4 0.8A1 1 0 0 1 7.8 0.8L8.6 1.6A1 1 0 0 1 8.6 3L3.1 8.5Z" fill="#4a4a4a"></path><path d="M5.4 2L7.4 4" stroke="#fff" stroke-width="0.6"></path></svg><span class="t med" style="left: 23.3px; top: 9.91px; font-size: 10.3px; line-height: 14px; color: rgb(74, 74, 74); transform: scaleX(0.9209);">EDICIÓN DE PRECIO POR</span><span class="t med" style="left: 11px; top: 26.91px; font-size: 10.3px; line-height: 14px; color: rgb(74, 74, 74); transform: scaleX(0.9014);">ERRORES</span></li><li class="b" style="left:10px;top:238.89px;width:183px;height:34.93px;border:1px solid #f3f4f5;"><svg class="i" style="left:11px;top:11.9px;" width="11.2" height="8" viewBox="0 0 11.2 8" aria-hidden="true"><path d="M0.6 4Q5.6 -2.2 10.6 4Q5.6 10.2 0.6 4Z" fill="none" stroke="#4a4a4a" stroke-width="1.1"></path><circle cx="5.6" cy="3.7" r="2.4" fill="#4a4a4a"></circle><path d="M4.6 2.2A1.6 1.6 0 0 0 4 3.6" fill="none" stroke="#fff" stroke-width="0.6"></path></svg><span class="t med" style="left: 24.5px; top: 10.11px; font-size: 10.3px; line-height: 14px; color: rgb(74, 74, 74); transform: scaleX(0.9582);">HIST. EDITAR CONTACTO</span></li><li class="b" style="left:10px;top:272.82px;width:183px;height:52.8px;border:1px solid #f3f4f5;"><svg class="i" style="left:11px;top:11.9px;" width="11.2" height="8" viewBox="0 0 11.2 8" aria-hidden="true"><path d="M0.6 4Q5.6 -2.2 10.6 4Q5.6 10.2 0.6 4Z" fill="none" stroke="#4a4a4a" stroke-width="1.1"></path><circle cx="5.6" cy="3.7" r="2.4" fill="#4a4a4a"></circle><path d="M4.6 2.2A1.6 1.6 0 0 0 4 3.6" fill="none" stroke="#fff" stroke-width="0.6"></path></svg><span class="t med" style="left: 24.5px; top: 10.18px; font-size: 10.3px; line-height: 14px; color: rgb(74, 74, 74); transform: scaleX(0.9453);">HIST. EDITAR PRECIO</span><span class="t med" style="left: 11px; top: 27.18px; font-size: 10.3px; line-height: 14px; color: rgb(74, 74, 74); transform: scaleX(0.9681);">VOLUMEN</span></li><li class="b" style="left:10px;top:324.62px;width:183px;height:34.93px;border:1px solid #f3f4f5;"><svg class="i" style="left:11px;top:11.3px;" width="9.4" height="9.4" viewBox="0 0 9.4 9.4" aria-hidden="true"><path d="M0.3 9.1L0.9 6.3L6.4 0.8A1 1 0 0 1 7.8 0.8L8.6 1.6A1 1 0 0 1 8.6 3L3.1 8.5Z" fill="#4a4a4a"></path><path d="M5.4 2L7.4 4" stroke="#fff" stroke-width="0.6"></path></svg><span class="t med" style="left: 23.3px; top: 9.38px; font-size: 10.3px; line-height: 14px; color: rgb(74, 74, 74); transform: scaleX(0.9361);">LIBERAR GUIA</span></li><li class="b" style="left:10px;top:358.55px;width:183px;height:34.93px;border:1px solid #f3f4f5;"><svg class="i" style="left:11px;top:11.2px;" width="10.6" height="9.6" viewBox="0 0 10.6 9.6" aria-hidden="true"><path d="M2.6 3.6V0.6H6.8L8 1.8V3.6" fill="none" stroke="#4a4a4a" stroke-width="1"></path><path d="M0.4 8V4.6A1.2 1.2 0 0 1 1.6 3.4H9A1.2 1.2 0 0 1 10.2 4.6V8H8V6H2.6V8Z" fill="#4a4a4a"></path><path d="M2.6 6.4V9H8V6.4" fill="none" stroke="#4a4a4a" stroke-width="1"></path></svg><span class="t med" style="left: 24px; top: 9.45px; font-size: 10.3px; line-height: 14px; color: rgb(74, 74, 74); transform: scaleX(0.9948);">Imprimir OS QZ</span></li><li class="b" style="left:10px;top:392.48px;width:183px;height:34.93px;border:1px solid #f3f4f5;"><svg class="i" style="left:11px;top:11.2px;" width="10.6" height="9.6" viewBox="0 0 10.6 9.6" aria-hidden="true"><path d="M2.6 3.6V0.6H6.8L8 1.8V3.6" fill="none" stroke="#4a4a4a" stroke-width="1"></path><path d="M0.4 8V4.6A1.2 1.2 0 0 1 1.6 3.4H9A1.2 1.2 0 0 1 10.2 4.6V8H8V6H2.6V8Z" fill="#4a4a4a"></path><path d="M2.6 6.4V9H8V6.4" fill="none" stroke="#4a4a4a" stroke-width="1"></path></svg><span class="t med" style="left: 24px; top: 9.52px; font-size: 10.3px; line-height: 14px; color: rgb(74, 74, 74); transform: scaleX(0.9319);">VER TICKET OS</span></li><li class="b" style="left:10px;top:426.41px;width:183px;height:34.93px;border:1px solid #f3f4f5;background:#f8f9fa;"><svg class="i" style="left:11px;top:11.3px;" width="9.4" height="9.4" viewBox="0 0 9.4 9.4" aria-hidden="true"><circle cx="4.7" cy="4.7" r="4.6" fill="#1a1a1a"></circle><path d="M2 4.7H6.6M4.6 2.4L7 4.7L4.6 7" fill="none" stroke="#fff" stroke-width="1.3"></path></svg><span class="t med" style="left: 23.3px; top: 9.59px; font-size: 10.3px; line-height: 14px; color: rgb(31, 31, 31); transform: scaleX(0.921);">ENTREGAR</span></li><li class="b" style="left:10px;top:460.34px;width:183px;height:34.93px;border:1px solid #f3f4f5;"><svg class="i" style="left:11px;top:10.7px;" width="10.8" height="10.2" viewBox="0 0 10.8 10.2" aria-hidden="true"><path d="M5.4 0.6L10.4 9.6H0.4Z" fill="#333" stroke="#333" stroke-width="0.7" stroke-linejoin="round"></path><path d="M5.4 3.5V6.6" stroke="#fff" stroke-width="1.4"></path><circle cx="5.4" cy="8" r="0.75" fill="#fff"></circle></svg><span class="t med" style="left: 24.7px; top: 9.66px; font-size: 10.3px; line-height: 14px; color: rgb(74, 74, 74); transform: scaleX(1.0226);">Agregar Incidencia</span></li><li class="b" style="left:10px;top:494.27px;width:183px;height:34.93px;border:1px solid #f3f4f5;"><svg class="i" style="left:11px;top:11.2px;" width="8.2" height="9.6" viewBox="0 0 8.2 9.6" aria-hidden="true"><path d="M0.5 0.5H5L7.6 3.1V9.1H0.5Z" fill="none" stroke="#4a4a4a" stroke-width="1"></path><path d="M4.8 0.7V3.3H7.4" fill="none" stroke="#4a4a4a" stroke-width="0.8"></path></svg><span class="t med" style="left: 22px; top: 9.73px; font-size: 10.3px; line-height: 14px; color: rgb(74, 74, 74); transform: scaleX(0.9587);">Agregar GRR</span></li><li class="b" style="left:10px;top:528.2px;width:183px;height:34.93px;border:1px solid #f3f4f5;"><svg class="i" style="left:11px;top:11.2px;" width="10.6" height="9.6" viewBox="0 0 10.6 9.6" aria-hidden="true"><path d="M2.6 3.6V0.6H6.8L8 1.8V3.6" fill="none" stroke="#4a4a4a" stroke-width="1"></path><path d="M0.4 8V4.6A1.2 1.2 0 0 1 1.6 3.4H9A1.2 1.2 0 0 1 10.2 4.6V8H8V6H2.6V8Z" fill="#4a4a4a"></path><path d="M2.6 6.4V9H8V6.4" fill="none" stroke="#4a4a4a" stroke-width="1"></path></svg><span class="t med" style="left: 24px; top: 9.8px; font-size: 10.3px; line-height: 14px; color: rgb(74, 74, 74); transform: scaleX(1.0101);">Archivos Retorno Cargo</span></li><li class="b" style="left:10px;top:562.13px;width:183px;height:34.93px;border:1px solid #f3f4f5;"><svg class="i" style="left:11px;top:11.2px;" width="10.6" height="9.6" viewBox="0 0 10.6 9.6" aria-hidden="true"><path d="M2.6 3.6V0.6H6.8L8 1.8V3.6" fill="none" stroke="#4a4a4a" stroke-width="1"></path><path d="M0.4 8V4.6A1.2 1.2 0 0 1 1.6 3.4H9A1.2 1.2 0 0 1 10.2 4.6V8H8V6H2.6V8Z" fill="#4a4a4a"></path><path d="M2.6 6.4V9H8V6.4" fill="none" stroke="#4a4a4a" stroke-width="1"></path></svg><span class="t med" style="left: 23.8px; top: 9.87px; font-size: 10.3px; line-height: 14px; color: rgb(74, 74, 74); transform: scaleX(0.9212);">VER GRT</span></li><li class="b" style="left:10px;top:596.06px;width:183px;height:34.93px;border:1px solid #f3f4f5;"><svg class="i" style="left:11px;top:10.7px;" width="10.8" height="10.2" viewBox="0 0 10.8 10.2" aria-hidden="true"><path d="M5.4 0.6L10.4 9.6H0.4Z" fill="#333" stroke="#333" stroke-width="0.7" stroke-linejoin="round"></path><path d="M5.4 3.5V6.6" stroke="#fff" stroke-width="1.4"></path><circle cx="5.4" cy="8" r="0.75" fill="#fff"></circle></svg><span class="t med" style="left: 24.2px; top: 9.94px; font-size: 10.3px; line-height: 14px; color: rgb(74, 74, 74); transform: scaleX(1.0105);">Retención Legal</span></li><li class="b" style="left:10px;top:629.99px;width:183px;height:34.93px;border:1px solid #f3f4f5;border-radius:0 0 3px 3px;"><svg class="i" style="left:11px;top:11.1px;" width="8.4" height="9.8" viewBox="0 0 8.4 9.8" aria-hidden="true"><path d="M0 2H8.4" stroke="#4a4a4a" stroke-width="1"></path><path d="M2.8 1.8L3.3 0.5H5.1L5.6 1.8" fill="none" stroke="#4a4a4a" stroke-width="0.9"></path><path d="M1.1 2.3V8.6A0.6 0.6 0 0 0 1.7 9.2H6.7A0.6 0.6 0 0 0 7.3 8.6V2.3" fill="none" stroke="#4a4a4a" stroke-width="0.95"></path><path d="M3.3 3.7V7.7M5.1 3.7V7.7" stroke="#4a4a4a" stroke-width="0.8"></path></svg><span class="t med" style="left: 22px; top: 10.01px; font-size: 10.3px; line-height: 14px; color: rgb(74, 74, 74); transform: scaleX(1.0032);">Eliminar Clave</span></li></ul><svg class="i" style="left:13px;top:427px;" width="181.6" height="36" viewBox="0 0 181.6 36" aria-hidden="true"><rect x="1.2" y="1.3" width="179" height="32.9" rx="0.6" fill="none" stroke="#fa0a10" stroke-width="2.4"></rect></svg></div><div class="b" style="left:1594.4px;top:87px;width:6.6px;height:733px;background:#ebebeb"></div><div class="b" style="left:1595.3px;top:153px;width:5.7px;height:667px;background:#bdbdbd;border-radius:3px 3px 0 0"></div><span class="t" style="left: 1303.8px; top: 747px; font-size: 16px; line-height: 22px; color: rgba(95, 95, 95, 0.44); z-index: 50; transform: scaleX(1.0342);">Activar Windows</span><span class="t" style="left: 1303.8px; top: 769px; font-size: 11.6px; line-height: 16px; color: rgba(95, 95, 95, 0.4); z-index: 50; transform: scaleX(1.0616);">Ve a Configuración para activar Windows.</span><span class="t" style="left: 1423.7px; top: 776px; font-size: 20px; line-height: 26px; color: rgba(95, 95, 95, 0.44); z-index: 50; transform: scaleX(0.9877);">Activar Windows</span><span class="t" style="left: 1423.7px; top: 802px; font-size: 15px; line-height: 20px; color: rgba(95, 95, 95, 0.4); z-index: 50; transform: scaleX(0.9723);">Ve a Configuración para act</span><div class="b" style="left:1542.2px;top:766.4px;width:36.4px;height:36.4px;background:#fff;border-radius:50%;box-shadow:0 2px 6px rgba(0,0,0,.22);z-index:41"></div><span class="t" style="left:1553.4px;top:771px;font-size:24px;line-height:28px;font-weight:700;color:#5e0fe0;z-index:42;">?</span></body></html>
